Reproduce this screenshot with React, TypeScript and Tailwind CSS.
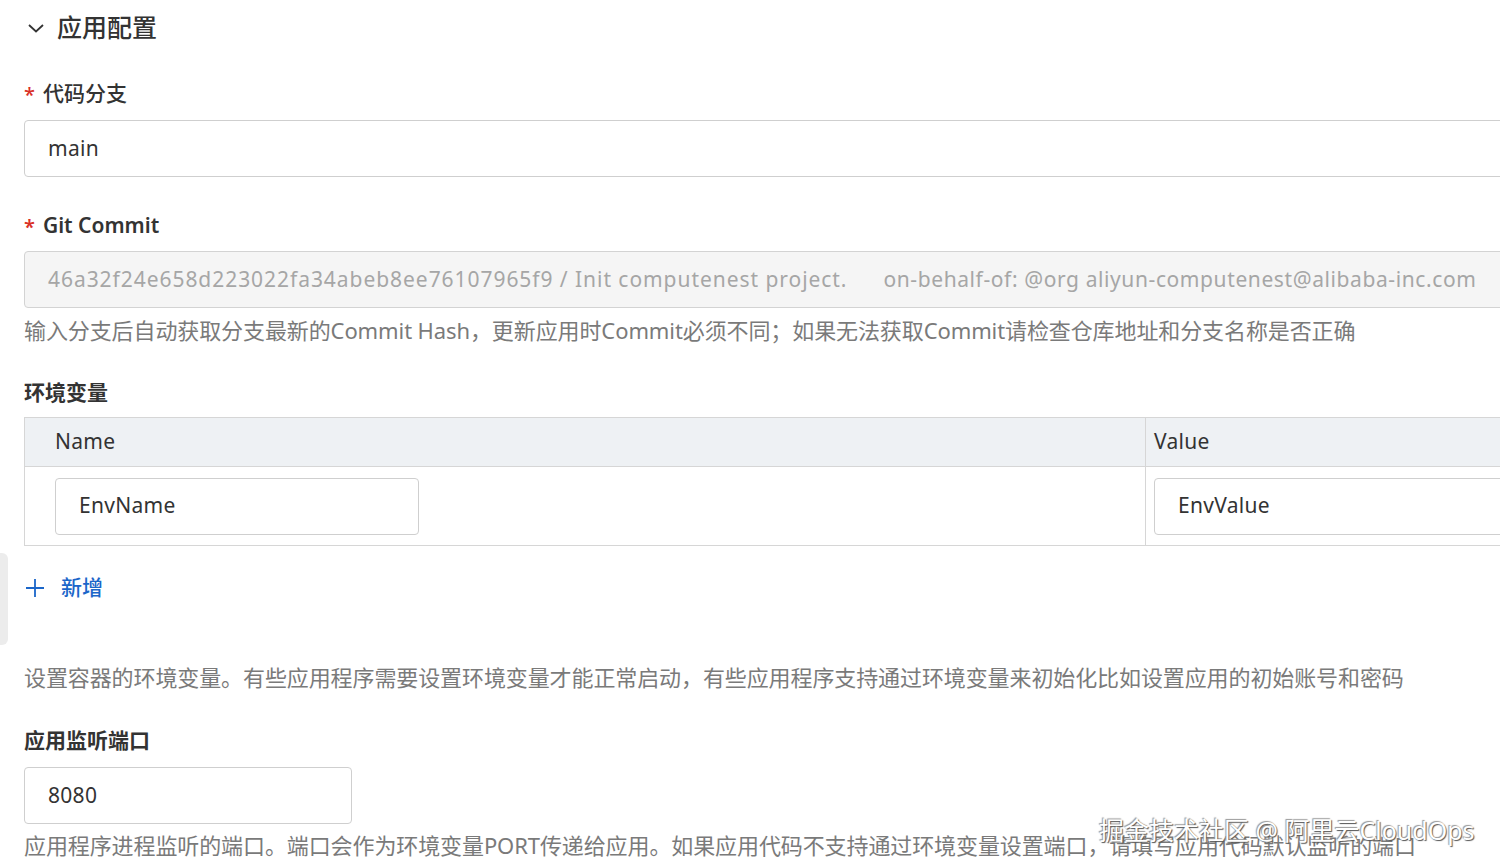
import React from 'react';

const FONT = '"Noto Sans", "Noto Sans CJK SC", sans-serif';

const Label: React.FC<{ text: string; required?: boolean; className?: string }> = ({ text, required, className }) => (
  <div className={`flex items-center h-[30px] text-[21px] font-medium text-[#333] ${className ?? ''}`}>
    {required && <span className="text-[#d93026] mr-[8px] text-[20px] leading-none mt-[2px]">*</span>}
    <span>{text}</span>
  </div>
);

const Help: React.FC<{ children: React.ReactNode; className?: string }> = ({ children, className }) => (
  <div className={`h-[30px] flex items-center text-[22px] tracking-[-0.1px] text-[#7a7a7a] whitespace-nowrap ${className ?? ''}`}>{children}</div>
);

const TextBox: React.FC<{ value: string; className?: string }> = ({ value, className }) => (
  <div className={`h-[57px] flex items-center border border-[#cfcfcf] rounded-[4px] bg-white px-[23px] text-[21px] tracking-[0.3px] text-[#333] ${className ?? ''}`}>
    {value}
  </div>
);

export default function App() {
  return (
    <div className="relative w-[1500px] h-[868px] overflow-hidden bg-white" style={{ fontFamily: FONT }}>
      <div className="w-[1540px] pl-[24px]">
        {/* section header */}
        <div className="h-[56px] flex items-center">
          <svg width="18" height="12" viewBox="0 0 18 12" className="ml-[3px] mr-[12px]">
            <path d="M2 3 L9 9.5 L16 3" fill="none" stroke="#333" strokeWidth="1.8" />
          </svg>
          <span className="text-[25px] font-medium text-[#333]">应用配置</span>
        </div>

        <Label text="代码分支" required className="mt-[23px]" />
        <TextBox value="main" className="mt-[11px]" />

        <Label text="Git Commit" required className="mt-[34px] font-semibold" />
        <div className="mt-[10px] h-[57px] flex items-center border border-[#d3d3d3] rounded-[4px] bg-[#f5f5f5] px-[23px] text-[21px] text-[#a6a6a6] whitespace-nowrap">
          <span className="tracking-[0.95px]">46a32f24e658d223022fa34abeb8ee76107965f9 / Init computenest project.</span>
          <span className="ml-[36px] tracking-[0.6px]">on-behalf-of: @org aliyun-computenest@alibaba-inc.com</span>
        </div>
        <Help className="mt-[7px]">
          输入分支后自动获取分支最新的Commit Hash，更新应用时Commit必须不同；如果无法获取Commit请检查仓库地址和分支名称是否正确
        </Help>

        <Label text="环境变量" className="mt-[33px] font-semibold" />
        <div className="mt-[9px] border border-[#d6d6d6] border-r-0">
          <div className="flex h-[49px] bg-[#eef1f4] border-b border-[#d6d6d6] text-[21px] tracking-[0.3px] text-[#333]">
            <div className="w-[1121px] flex items-center pl-[30px] border-r border-[#d6d6d6]">Name</div>
            <div className="flex-1 flex items-center pl-[8px]">Value</div>
          </div>
          <div className="flex h-[78px]">
            <div className="w-[1121px] flex items-center pl-[30px] border-r border-[#d6d6d6]">
              <TextBox value="EnvName" className="w-[364px]" />
            </div>
            <div className="flex-1 flex items-center pl-[8px]">
              <TextBox value="EnvValue" className="w-full" />
            </div>
          </div>
        </div>

        <div className="mt-[27px] h-[30px] flex items-center text-[21px] text-[#1b66c9] font-medium">
          <svg width="20" height="20" viewBox="0 0 20 20" className="mr-[16px] ml-[1px]">
            <path d="M10 1 V19 M1 10 H19" stroke="#1b66c9" strokeWidth="1.8" />
          </svg>
          新增
        </div>

        <Help className="mt-[59px]">
          设置容器的环境变量。有些应用程序需要设置环境变量才能正常启动，有些应用程序支持通过环境变量来初始化比如设置应用的初始账号和密码
        </Help>

        <Label text="应用监听端口" className="mt-[34px] font-semibold" />
        <TextBox value="8080" className="mt-[11px] w-[328px]" />
        <Help className="mt-[6px]">
          应用程序进程监听的端口。端口会作为环境变量PORT传递给应用。如果应用代码不支持通过环境变量设置端口，请填写应用代码默认监听的端口
        </Help>
      </div>

      {/* side tab peeking from the left edge */}
      <div className="absolute left-0 top-[553px] w-[8px] h-[92px] bg-[#ececec] rounded-r-[6px]" />

      {/* watermark */}
      <div
        className="absolute left-[1099px] top-[812px] text-[25px] text-white whitespace-nowrap"
        style={{ textShadow: '1px 1px 1px #555, -1px -1px 1px #999' }}
      >
        掘金技术社区 @ 阿里云CloudOps
      </div>
    </div>
  );
}
